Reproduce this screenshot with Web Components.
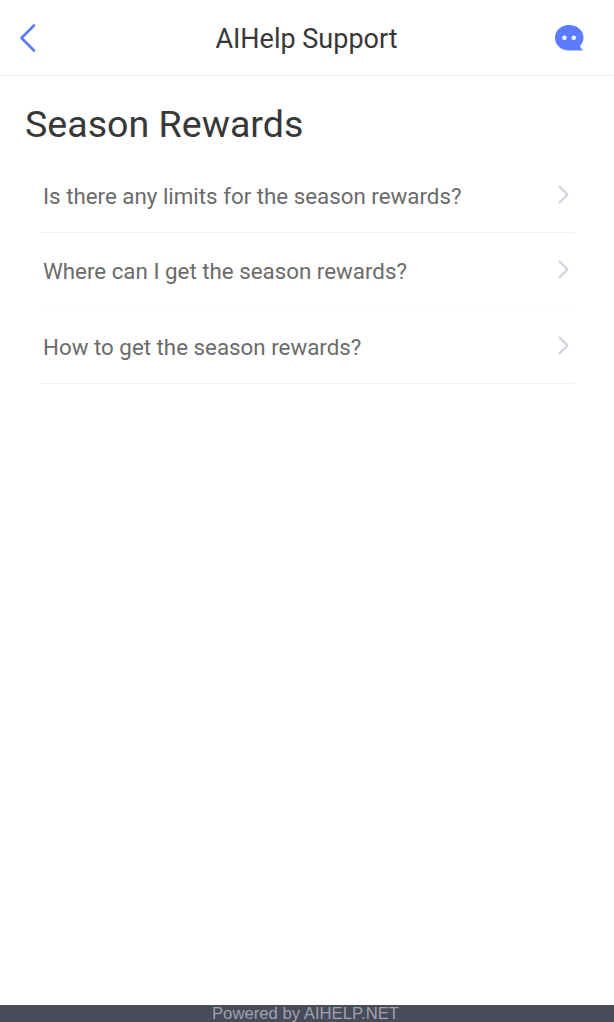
<!DOCTYPE html>
<html>
<head>
<meta charset="utf-8">
<title>AIHelp Support</title>
<style>
  html, body { margin: 0; height: 100%; background: #fff; }
  body { font-family: Roboto, "Liberation Sans", sans-serif; }
  support-page { height: 1022px; }
</style>
</head>
<body>
<support-page>
  <support-header title-text="AIHelp Support"></support-header>
  <faq-section heading="Season Rewards">
    <faq-row>Is there any limits for the season rewards?</faq-row>
    <faq-row faint>Where can I get the season rewards?</faq-row>
    <faq-row>How to get the season rewards?</faq-row>
  </faq-section>
  <powered-footer>Powered by AIHELP.NET</powered-footer>
</support-page>

<script>
class SupportPage extends HTMLElement {
  constructor() {
    super();
    this.attachShadow({ mode: 'open' });
    this.shadowRoot.innerHTML = `
      <style>
        :host {
          display: flex;
          flex-direction: column;
          width: 100%;
        }
      </style>
      <slot></slot>
    `;
  }
}

class SupportHeader extends HTMLElement {
  constructor() {
    super();
    this.attachShadow({ mode: 'open' });
  }

  connectedCallback() {
    this.shadowRoot.innerHTML = `
      <style>
        :host {
          display: grid;
          grid-template-columns: 1fr auto 1fr;
          align-items: center;
          flex: none;
          height: 75px;
          padding: 0 30px 0 20px;
          border-bottom: 1px solid #f1f1f3;
        }
        .title {
          font-size: 27px;
          line-height: 32px;
          padding-top: 2px;
          margin-left: 9px;
          color: #383838;
        }
        svg { display: block; }
        .chat { justify-self: end; }
      </style>
      <svg width="16" height="28" viewBox="0 0 16 28">
        <path d="M14 1.500 1.500 14 14 26.500" fill="none" stroke="#5c7cff" stroke-width="2.600" stroke-linecap="round" stroke-linejoin="round"/>
      </svg>
      <span class="title">${this.getAttribute('title-text')}</span>
      <svg class="chat" width="29" height="26" viewBox="0 0 29 26">
        <path d="M14 0C22 0 28.500 5.500 28.500 12.500 28.500 15.800 27.200 18.600 25.200 20.700 25.500 22.600 26.700 24.300 28.500 25.600H14C6 25.600 0 20 0 12.800 0 5.500 6 0 14 0z" fill="#5c7cff"/>
        <circle cx="9.500" cy="12.800" r="2.200" fill="#fff"/>
        <circle cx="18.800" cy="12.800" r="2.200" fill="#fff"/>
      </svg>
    `;
  }
}

class FaqSection extends HTMLElement {
  constructor() {
    super();
    this.attachShadow({ mode: 'open' });
  }

  connectedCallback() {
    this.shadowRoot.innerHTML = `
      <style>
        :host {
          display: block;
          flex: 1;
          padding: 27px 41px 0 40px;
        }
        h1 {
          margin: 0 0 0 -15px;
          font-size: 37.600px;
          font-weight: 400;
          line-height: 42px;
          color: #383838;
        }
        .rows { margin-top: 12px; }
      </style>
      <h1>${this.getAttribute('heading')}</h1>
      <div class="rows"><slot></slot></div>
    `;
  }
}

class FaqRow extends HTMLElement {
  constructor() {
    super();
    this.attachShadow({ mode: 'open' });
    this.shadowRoot.innerHTML = `
      <style>
        :host {
          display: flex;
          align-items: center;
          justify-content: space-between;
          box-sizing: border-box;
          height: 75.500px;
          padding: 3px 3px 0 3px;
          border-bottom: 1px solid #f3f3f5;
          font-size: 22.330px;
          color: #6b6b6b;
        }
        :host([faint]) { border-bottom-color: #fbfbfc; }
        svg { display: block; margin-top: -3px; }
      </style>
      <slot></slot>
      <svg width="13" height="21" viewBox="0 0 13 21">
        <path d="M2.500 2.500 10.500 10.500 2.500 18.500" fill="none" stroke="#d0d3db" stroke-width="2.200" stroke-linecap="round" stroke-linejoin="round"/>
      </svg>
    `;
  }
}

class PoweredFooter extends HTMLElement {
  constructor() {
    super();
    this.attachShadow({ mode: 'open' });
    this.shadowRoot.innerHTML = `
      <style>
        :host {
          display: block;
          flex: none;
          height: 17px;
          padding-right: 3px;
          background: #484b59;
          color: #9fa2af;
          font: 16.700px/17px "Liberation Sans", Arial, sans-serif;
          text-align: center;
        }
      </style>
      <slot></slot>
    `;
  }
}

customElements.define('support-page', SupportPage);
customElements.define('support-header', SupportHeader);
customElements.define('faq-section', FaqSection);
customElements.define('faq-row', FaqRow);
customElements.define('powered-footer', PoweredFooter);
</script>
</body>
</html>
